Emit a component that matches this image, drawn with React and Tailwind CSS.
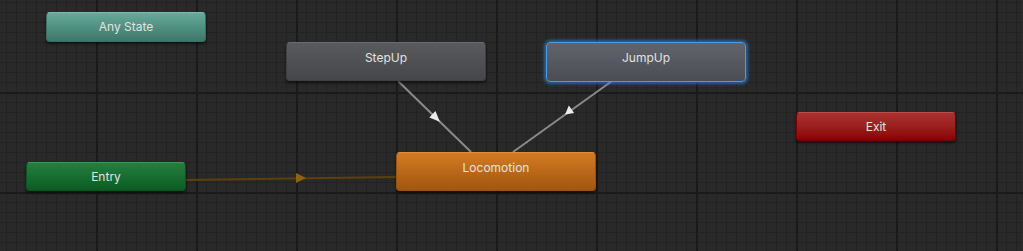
import React from "react";

function Node({ className, label, pad, shadow = "shadow-[0_2px_3px_rgba(0,0,0,0.55)]" }) {
  return (
    <div
      className={`absolute rounded-[4px] border text-center text-[12px] leading-4 text-[#e2e2e2] ${shadow} ${pad} ${className}`}
    >
      {label}
    </div>
  );
}

function Edges() {
  return (
    <svg className="absolute inset-0" width="1023" height="251" viewBox="0 0 1023 251">
      <defs>
        <pattern id="minor" x="6" y="2" width="10" height="10" patternUnits="userSpaceOnUse">
          <rect x="0" y="0" width="1" height="10" fill="#222222" />
          <rect x="0" y="0" width="10" height="1" fill="#222222" />
        </pattern>
        <pattern id="major" x="-4" y="-8" width="100" height="100" patternUnits="userSpaceOnUse">
          <rect x="0" y="0" width="2" height="100" fill="#1a1a1a" />
          <rect x="0" y="0" width="100" height="2" fill="#1a1a1a" />
        </pattern>
      </defs>
      <rect width="1023" height="251" fill="url(#minor)" />
      <rect width="1023" height="251" fill="url(#major)" />

      {/* entry -> locomotion */}
      <line x1="186" y1="180" x2="397" y2="177" stroke="#5c410d" strokeWidth="2" />
      <polygon points="296,173 296,183 306,178" fill="#8e6210" />

      {/* stepup -> locomotion */}
      <line x1="398" y1="81" x2="471" y2="152" stroke="#8a8a8a" strokeWidth="2" />
      <polygon points="439.8,121.7 429.3,117.6 435.5,111.1" fill="#ececec" />

      {/* jumpup -> locomotion */}
      <line x1="612" y1="81" x2="513" y2="152" stroke="#8a8a8a" strokeWidth="2" />
      <polygon points="565.1,114.6 568.8,105.6 574.1,112.9" fill="#ececec" />
    </svg>
  );
}

export default function App() {
  return (
    <div className="relative h-[251px] w-[1023px] overflow-hidden bg-[#292929] font-['Inter','Noto_Sans',sans-serif]">
      <Edges />

      <Node
        label="Any State"
        pad="pt-[6px]"
        className="left-[46px] top-[12px] h-[30px] w-[160px] border-[#3b6f63] border-t-[#7cbcad] bg-linear-to-b from-[#65aa9a] to-[#3d786a]"
      />
      <Node
        label="StepUp"
        pad="pt-[7px]"
        className="left-[286px] top-[42px] h-[39px] w-[200px] border-[#3f4043] border-t-[#6a6b6f] bg-linear-to-b from-[#595a5e] to-[#46474b]"
      />
      <Node
        label="JumpUp"
        pad="pt-[7px]"
        shadow="shadow-[0_0_3px_2px_rgba(45,135,230,0.6)]"
        className="left-[546px] top-[42px] h-[40px] w-[200px] border-[#4a9be6] bg-linear-to-b from-[#61646a] to-[#4a4d53]"
      />
      <Node
        label="Locomotion"
        pad="pt-[7px]"
        className="left-[396px] top-[152px] h-[39px] w-[200px] border-[#9a520f] border-t-[#e08c3a] bg-linear-to-b from-[#d37b22] to-[#a25610]"
      />
      <Node
        label="Entry"
        pad="pt-[6px]"
        className="left-[26px] top-[162px] h-[29px] w-[160px] border-[#0a5421] border-t-[#3d9656] bg-linear-to-b from-[#23803e] to-[#0b5c24]"
      />
      <Node
        label="Exit"
        pad="pt-[6px]"
        className="left-[796px] top-[112px] h-[29px] w-[160px] border-[#7d0000] border-t-[#bb4a4a] bg-linear-to-b from-[#a93232] to-[#8b0000]"
      />
    </div>
  );
}
